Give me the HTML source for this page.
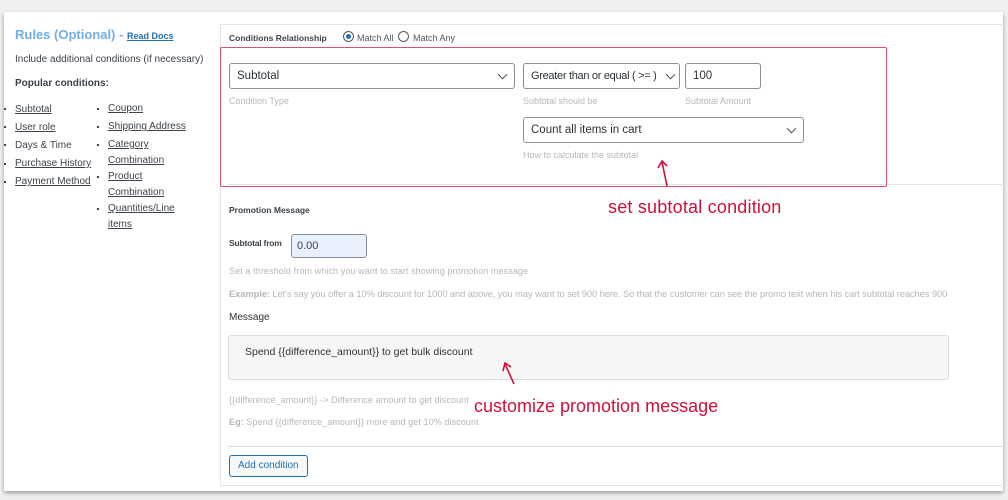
<!DOCTYPE html>
<html><head><meta charset="utf-8"><style>
*{margin:0;padding:0;box-sizing:border-box}
body{width:1008px;height:500px;background:#efefef;font-family:"Liberation Sans","DejaVu Sans",sans-serif;color:#3c434a;position:relative;overflow:hidden}
.card{position:absolute;left:4px;top:12px;width:999px;height:479px;background:#fff;box-shadow:0 2px 4px rgba(0,0,0,.35)}
.a{position:absolute;white-space:nowrap}
.panel{position:absolute;left:220px;top:24px;width:784px;height:462px;border:1px solid #e2e4e7;border-right:none}
.lnk{text-decoration:underline;color:#3c434a}
.sel{position:absolute;height:26px;border:1px solid #8c8f94;border-radius:3px;background:#fff;font-size:11.5px;padding:6px 0 0 7px;color:#2c3338}
.chev{position:absolute;right:8px;top:7px;width:7px;height:7px;border-right:1.3px solid #50575e;border-bottom:1.3px solid #50575e;transform:rotate(45deg)}
.hint{font-size:9px;color:#b4b8bc}
.red{color:#d0103a}
.bul{position:absolute;width:2px;height:2px;background:#3c434a}
</style></head><body>
<div class="card"></div>
<div class="a" style="left:15px;top:27px;font-size:13px;font-weight:bold;color:#72aee6">Rules (Optional) - <span style="font-size:9px;color:#2271b1;text-decoration:underline">Read Docs</span></div>
<div class="a" style="left:15px;top:54px;font-size:10px">Include additional conditions (if necessary)</div>
<div class="a" style="left:15px;top:78px;font-size:10px;font-weight:bold">Popular conditions:</div>
<div class="a" style="left:15px;top:101px;font-size:10px;line-height:18px">
<div class="lnk">Subtotal</div><div class="lnk">User role</div><div>Days &amp; Time</div><div class="lnk">Purchase History</div><div class="lnk">Payment Method</div></div>
<div class="bul" style="left:4px;top:108px"></div><div class="bul" style="left:4px;top:126px"></div><div class="bul" style="left:4px;top:144px"></div><div class="bul" style="left:4px;top:163px"></div><div class="bul" style="left:4px;top:181px"></div>
<div class="a" style="left:108px;top:101px;font-size:10px;line-height:16px">
<div class="lnk" style="margin-bottom:2px">Coupon</div><div class="lnk" style="margin-bottom:2px">Shipping Address</div><div class="lnk">Category<br>Combination</div><div class="lnk">Product<br>Combination</div><div class="lnk">Quantities/Line<br>items</div></div>
<div class="bul" style="left:97px;top:108px"></div><div class="bul" style="left:97px;top:126px"></div><div class="bul" style="left:97px;top:144px"></div><div class="bul" style="left:97px;top:176px"></div><div class="bul" style="left:97px;top:208px"></div>
<div class="panel"></div>
<div class="a" style="left:229px;top:33px;font-size:8.5px;font-weight:bold">Conditions Relationship</div>
<div class="a" style="left:343px;top:31px;width:11px;height:11px;border:1px solid #50575e;border-radius:50%"><div style="margin:2px;width:5px;height:5px;border-radius:50%;background:#2271b1"></div></div>
<div class="a" style="left:357px;top:33px;font-size:9px;color:#50575e">Match All</div>
<div class="a" style="left:398px;top:31px;width:11px;height:11px;border:1px solid #50575e;border-radius:50%"></div>
<div class="a" style="left:413px;top:33px;font-size:9px;color:#50575e">Match Any</div>
<div class="a" style="left:228px;top:184px;width:776px;height:1px;background:#e2e4e7"></div>
<div class="a" style="left:220px;top:47px;width:667px;height:140px;border:1px solid #d9536e;border-radius:2px"></div>
<div class="sel" style="left:229px;top:63px;width:286px">Subtotal<div class="chev"></div></div>
<div class="a hint" style="left:229px;top:96px">Condition Type</div>
<div class="sel" style="left:523px;top:63px;width:157px;font-size:11px;letter-spacing:-.3px">Greater than or equal ( &gt;= )<div class="chev" style="right:5px"></div></div>
<div class="a hint" style="left:523px;top:96px">Subtotal should be</div>
<div class="sel" style="left:685px;top:63px;width:76px">100</div>
<div class="a hint" style="left:685px;top:96px">Subtotal Amount</div>
<div class="sel" style="left:523px;top:117px;width:281px">Count all items in cart<div class="chev"></div></div>
<div class="a hint" style="left:523px;top:150px">How to calculate the subtotal</div>
<svg class="a" style="left:655px;top:158px" width="20" height="30"><path d="M12 28 L7 4 M3 10 L7 3 L12 8" fill="none" stroke="#d0103a" stroke-width="1.6"/></svg>
<div class="a red" style="left:608px;top:197px;font-size:18px;letter-spacing:.2px">set subtotal condition</div>
<div class="a" style="left:229px;top:205px;font-size:8.5px;font-weight:bold">Promotion Message</div>
<div class="a" style="left:229px;top:238px;font-size:8.5px;font-weight:bold;letter-spacing:-.2px">Subtotal from</div>
<div class="a" style="left:291px;top:234px;width:76px;height:24px;border:1px solid #8c8f94;border-radius:3px;background:#e8f0fe;font-size:11px;padding:5px 0 0 5px">0.00</div>
<div class="a hint" style="left:229px;top:266px;font-size:9px;letter-spacing:.1px">Set a threshold from which you want to start showing promotion message</div>
<div class="a hint" style="left:229px;top:288px;font-size:9.4px;letter-spacing:-.1px"><b>Example:</b> Let's say you offer a 10% discount for 1000 and above, you may want to set 900 here. So that the customer can see the promo text when his cart subtotal reaches 900</div>
<div class="a" style="left:229px;top:312px;font-size:10px;color:#2c3338">Message</div>
<div class="a" style="left:228px;top:335px;width:721px;height:45px;border:1px solid #dcdcde;border-radius:3px;background:#f6f6f7"></div>
<div class="a" style="left:245px;top:346px;font-size:10.5px;color:#2c3338">Spend {{difference_amount}} to get bulk discount</div>
<svg class="a" style="left:500px;top:360px" width="20" height="26"><path d="M14 24 L5 4 M3 11 L5 3 L11 7" fill="none" stroke="#d0103a" stroke-width="1.6"/></svg>
<div class="a hint" style="left:229px;top:395px;font-size:9px;letter-spacing:.1px">{{difference_amount}} -&gt; Difference amount to get discount</div>
<div class="a red" style="left:474px;top:396px;font-size:18px;letter-spacing:0px">customize promotion message</div>
<div class="a hint" style="left:229px;top:417px;font-size:9px;letter-spacing:.1px"><b>Eg:</b> Spend {{difference_amount}} more and get 10% discount</div>
<div class="a" style="left:228px;top:446px;width:776px;height:1px;background:#dcdcde"></div>
<div class="a" style="left:229px;top:455px;width:79px;height:22px;border:1px solid #2271b1;border-radius:3px;background:#f6f7f7;color:#2271b1;font-size:10px;padding:4px 0 0 8px">Add condition</div>
</body></html>
